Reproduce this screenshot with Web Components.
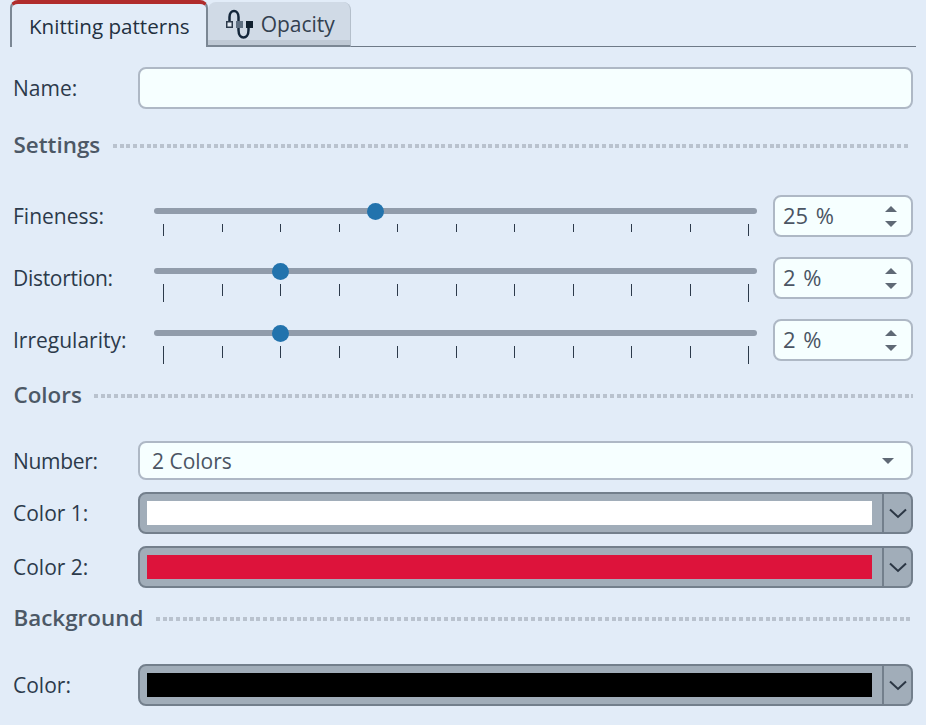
<!DOCTYPE html>
<html lang="en">
<head>
<meta charset="UTF-8">
<title>Knitting patterns</title>
<style>
	html, body { margin: 0; background: #e2ecf8; }
	body { font: 21px "Open Sans", "Noto Sans", sans-serif; color: #2c3a4b; }
</style>
<script>
	function define(name, css, html) {
		customElements.define(name, class extends HTMLElement {
			connectedCallback() {
				if (this.shadowRoot) return;
				const root = this.attachShadow({mode: 'open'});
				root.innerHTML = `<style>${css}</style>` + (typeof html === 'function' ? html(this) : html);
			}
		});
	}

	define('tab-bar', `
		:host { display: flex; height: 47px; margin: 0 10px; border-bottom: 1px solid #6e7a88; box-sizing: border-box; }
	`, `<slot></slot>`);

	define('panel-tab', `
		:host { display: flex; align-items: center; box-sizing: border-box; height: 47px; gap: 7px; padding: 0 16px 0 17px; font-size: 20.6px; background: #e2ecf8; color: #23303f; border-style: solid; border-color: #b02c2c #7b8794 transparent #7b8794; border-width: 4px 2px 0 2px; border-radius: 8px 8px 0 0; }
		:host([off]) { height: 45px; margin-top: 2px; padding: 1px 15px 0 16px; font-size: 21px; background: linear-gradient(#d0dae6 0 38px, #bfc9d5 38px); border: 0; border-right: 1px solid #b4bfcb; border-bottom: 2px solid #7b8794; color: #33404f; }
		svg { display: block; }
	`, `<slot name="icon"></slot><slot></slot>`);

	define('form-row', `
		:host { display: grid; grid-template-columns: 125px 1fr; align-items: center; padding: 0 13px 0 13px; }
	`, `<span><slot name="label"></slot></span><slot></slot>`);

	define('section-head', `
		:host { display: flex; align-items: center; gap: 12.5px; box-sizing: border-box; padding: 0 13px 2px 13.5px; color: #4c5866; font-weight: 600; font-size: 22.4px; height: 30px; }
		i { flex: 1; height: 4px; margin-top: 4px; background: repeating-linear-gradient(90deg, #b9c2ce 0 4px, transparent 4px 6.7px); }
	`, `<slot></slot><i></i>`);

	define('text-box', `
		:host { display: block; box-sizing: border-box; height: 42px; background: #f6ffff; border: 2px solid #aeb8c5; border-radius: 8px; }
	`, ``);

	define('slider-row', `
		:host { display: grid; grid-template-columns: 141px 603px 1fr; padding: 0 13px; height: 42px; }
		.label { align-self: center; }
		.scale { position: relative; height: 42px; }
		.track { height: 6px; border-radius: 3px; background: #919cab; }
		.thumb { position: absolute; width: 17px; height: 17px; margin-left: -8.5px; border-radius: 50%; background: #2273ad; }
		.ticks { display: flex; justify-content: space-between; align-items: flex-start; margin: 10px 8px 0 9px; }
		.ticks b { display: block; width: 1px; background: #2c3a4b; }
		.spin { margin-left: 16px; box-sizing: border-box; height: 42px; display: flex; align-items: center; justify-content: space-between; padding: 0 14px 0 8px; background: #f6ffff; border: 2px solid #aeb8c5; border-radius: 8px; color: #4b5563; font-size: 22px; word-spacing: 2px; }
		.value { margin-top: -2px; }
		.arrows { display: flex; flex-direction: column; gap: 9px; }
		.arrows svg { display: block; }
	`, host => {
		const heights = host.getAttribute('ticks').split(',');
		const bars = heights.map(h => `<b style="height:${h}px"></b>`).join('');
		const top = +host.getAttribute('top');
		return `<span class="label"><slot></slot></span>
			<div class="scale"><div class="track" style="margin-top:${top}px"></div><div class="thumb" style="top:${top - 5.5}px;left:${host.getAttribute('at')}px"></div><div class="ticks">${bars}</div></div>
			<div class="spin"><span class="value">${host.getAttribute('value')}</span><span class="arrows">
				<svg width="12" height="6"><path d="M6 0L12 6H0Z" fill="#5f6975"/></svg>
				<svg width="12" height="6"><path d="M0 0H12L6 6Z" fill="#5f6975"/></svg>
			</span></div>`;
	});

	define('drop-down', `
		:host { display: flex; align-items: center; justify-content: space-between; box-sizing: border-box; height: 39px; padding: 0 17px 0 12px; background: #f6ffff; border: 2px solid #aeb8c5; border-radius: 8px; color: #4b5563; }
	`, `<slot></slot><svg width="12" height="6"><path d="M0 0H12L6 6Z" fill="#5f6975"/></svg>`);

	define('color-pick', `
		:host { display: flex; box-sizing: border-box; height: 42px; background: #a1adb9; border: 2px solid #737f8c; border-radius: 8px; }
		.swatch { flex: 1; margin: 7px 10px 7px 7px; }
		.btn { box-sizing: border-box; width: 29px; border-left: 2px solid #737f8c; display: flex; align-items: center; justify-content: center; }
		svg { display: block; }
	`, host => `<div class="swatch" style="background:${host.getAttribute('color')}"></div><div class="btn"><svg width="18" height="11" viewBox="0 0 18 11"><path d="M1 1.5L9 9L17 1.5" fill="none" stroke="#2b3644" stroke-width="2"/></svg></div>`);
</script>
</head>
<body>
<tab-bar>
	<panel-tab>Knitting patterns</panel-tab>
	<panel-tab off>
		<svg slot="icon" width="30" height="30" viewBox="0 0 30 30" fill="none">
			<path d="M5.5 12V8C5.5 0 14.5 0 14.5 8V21C14.5 31 24.5 31 24.5 21V18" stroke="#13263a" stroke-width="2.5"/>
			<rect x="2.75" y="12.75" width="5.5" height="5.5" fill="#e4ebf3" stroke="#2c3a4b" stroke-width="1.5"/>
			<rect x="12" y="12" width="7" height="7" fill="#5f7082"/>
			<rect x="22" y="12" width="7" height="7" fill="#10202f"/>
		</svg>
		Opacity
	</panel-tab>
</tab-bar>
<form-row style="margin-top:20px"><span slot="label">Name:</span><text-box></text-box></form-row>
<section-head style="margin-top:21px;padding-right:16px">Settings</section-head>
<slider-row style="margin-top:35px" top="13" at="221" value="25 %" ticks="12,8,8,8,8,8,8,8,8,8,12">Fineness:</slider-row>
<slider-row style="margin-top:20px" top="11" at="126" value="2 %" ticks="18,12,12,12,12,12,12,12,12,12,18"><span style="letter-spacing:-.3px">Distortion:</span></slider-row>
<slider-row style="margin-top:20px" top="11" at="126" value="2 %" ticks="18,12,12,12,12,12,12,12,12,12,18">Irregularity:</slider-row>
<section-head style="margin-top:19px">Colors</section-head>
<form-row style="margin-top:31px"><span slot="label" style="letter-spacing:-.3px">Number:</span><drop-down>2 Colors</drop-down></form-row>
<form-row style="margin-top:12px"><span slot="label">Color 1:</span><color-pick color="#ffffff"></color-pick></form-row>
<form-row style="margin-top:12px"><span slot="label">Color 2:</span><color-pick color="#dd133b"></color-pick></form-row>
<section-head style="margin-top:15px">Background</section-head>
<form-row style="margin-top:31px"><span slot="label">Color:</span><color-pick color="#000000"></color-pick></form-row>
</body>
</html>
